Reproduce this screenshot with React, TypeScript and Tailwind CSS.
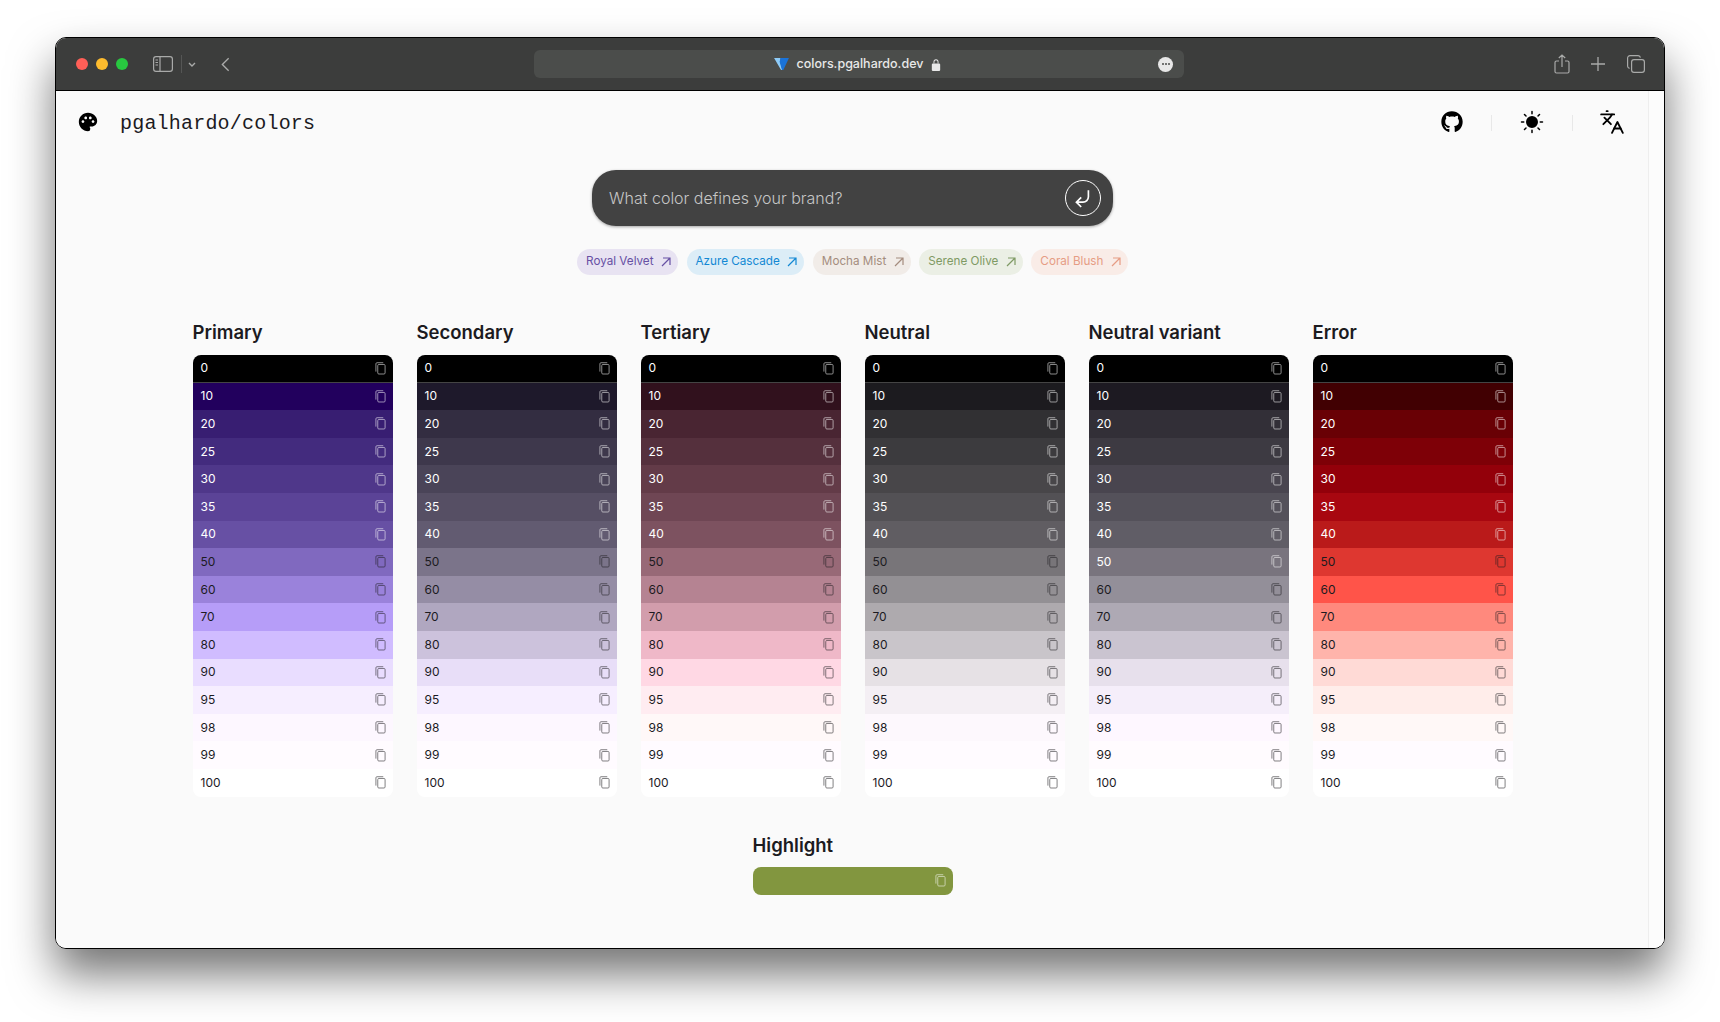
import { Languages } from "lucide-react";
import { MdPalette } from "react-icons/md";
import { FaGithub } from "react-icons/fa";
import { PiSunFill } from "react-icons/pi";

const TONES = ["0", "10", "20", "25", "30", "35", "40", "50", "60", "70", "80", "90", "95", "98", "99", "100"];

const PALETTES = [
  {
    name: "Primary",
    rows: [
      "bg-[#000000]", "bg-[#22005d]", "bg-[#381e72]", "bg-[#432b7e]", "bg-[#4f378a]", "bg-[#5b4397]", "bg-[#6750a4]", "bg-[#8069bf]",
      "bg-[#9a82db]", "bg-[#b69df8]", "bg-[#d0bcff]", "bg-[#e9ddff]", "bg-[#f6eeff]", "bg-[#fdf7ff]", "bg-[#fffbff]", "bg-[#ffffff]",
    ],
  },
  {
    name: "Secondary",
    rows: [
      "bg-[#000000]", "bg-[#1e192b]", "bg-[#332d41]", "bg-[#3e384c]", "bg-[#4a4458]", "bg-[#564f64]", "bg-[#625b71]", "bg-[#7b748a]",
      "bg-[#958da5]", "bg-[#b0a7c0]", "bg-[#ccc2dc]", "bg-[#e8def8]", "bg-[#f6eeff]", "bg-[#fdf7ff]", "bg-[#fffbff]", "bg-[#ffffff]",
    ],
  },
  {
    name: "Tertiary",
    rows: [
      "bg-[#000000]", "bg-[#31111d]", "bg-[#492532]", "bg-[#55303d]", "bg-[#633b48]", "bg-[#6f4654]", "bg-[#7d5260]", "bg-[#986977]",
      "bg-[#b58392]", "bg-[#d29dac]", "bg-[#efb8c8]", "bg-[#ffd8e4]", "bg-[#ffecf1]", "bg-[#fff8f8]", "bg-[#fffbff]", "bg-[#ffffff]",
    ],
  },
  {
    name: "Neutral",
    rows: [
      "bg-[#000000]", "bg-[#1c1b1f]", "bg-[#313033]", "bg-[#3c3b3e]", "bg-[#484649]", "bg-[#535155]", "bg-[#605d62]", "bg-[#787579]",
      "bg-[#939094]", "bg-[#aeaaae]", "bg-[#c9c5ca]", "bg-[#e6e1e5]", "bg-[#f4eff4]", "bg-[#fdf8fd]", "bg-[#fffbff]", "bg-[#ffffff]",
    ],
  },
  {
    name: "Neutral variant",
    lightFifty: true,
    rows: [
      "bg-[#000000]", "bg-[#1d1a22]", "bg-[#322f37]", "bg-[#3d3a42]", "bg-[#49454f]", "bg-[#54515a]", "bg-[#605d66]", "bg-[#79747e]",
      "bg-[#938f99]", "bg-[#aea9b4]", "bg-[#cac4d0]", "bg-[#e7e0ec]", "bg-[#f5eefa]", "bg-[#fef7ff]", "bg-[#fffbfe]", "bg-[#ffffff]",
    ],
  },
  {
    name: "Error",
    rows: [
      "bg-[#000000]", "bg-[#410002]", "bg-[#690005]", "bg-[#7e0007]", "bg-[#93000a]", "bg-[#a80710]", "bg-[#ba1a1a]", "bg-[#de3730]",
      "bg-[#ff5449]", "bg-[#ff897d]", "bg-[#ffb4ab]", "bg-[#ffdad6]", "bg-[#ffedea]", "bg-[#fff8f7]", "bg-[#fffbff]", "bg-[#ffffff]",
    ],
  },
];

const CHIPS = [
  { label: "Royal Velvet", cls: "bg-[#e8e3f2] text-[#6750a4]" },
  { label: "Azure Cascade", cls: "bg-[#dcedf7] text-[#1288d4]" },
  { label: "Mocha Mist", cls: "bg-[#f1ece8] text-[#a48c7e]" },
  { label: "Serene Olive", cls: "bg-[#ebefe5] text-[#7f9a64]" },
  { label: "Coral Blush", cls: "bg-[#f9ece7] text-[#e69c84]" },
];

function CopyIcon({ className }: { className?: string }) {
  return (
    <svg viewBox="0 0 12 14" className={`h-[13px] w-[11px] ${className ?? ""}`} fill="none" stroke="currentColor" strokeWidth="1">
      <rect x="3" y="2.6" width="8" height="10.4" rx="1.2" />
      <path d="M9 0.7H2.2A1.2 1.2 0 0 0 1 1.9V10.4" />
    </svg>
  );
}

function Swatch({ tone, bg, dark, first, last }: { tone: string; bg: string; dark: boolean; first: boolean; last: boolean }) {
  return (
    <div
      className={`flex h-[27.6px] items-center justify-between pl-2 pr-[7px] text-xs ${bg} ${dark ? "text-[#1c1b1f]" : "text-white"} ${
        first ? "rounded-t-lg border-b border-[#444444]" : ""
      } ${last ? "rounded-b-lg" : ""}`}
    >
      <span>{tone}</span>
      <CopyIcon className="opacity-60" />
    </div>
  );
}

function Toolbar() {
  return (
    <div className="relative flex h-[53px] shrink-0 items-center border-b border-black bg-[#3c3d3c] text-[#a9aaa9]">
      <div className="ml-[20px] flex gap-2">
        <div className="h-3 w-3 rounded-full bg-[#ff5f57]" />
        <div className="h-3 w-3 rounded-full bg-[#febc2e]" />
        <div className="h-3 w-3 rounded-full bg-[#28c840]" />
      </div>
      <svg viewBox="0 0 20 16" className="ml-[25px] h-[16px] w-[20px]" fill="none" stroke="currentColor" strokeWidth="1.2">
        <rect x="0.6" y="0.6" width="18.8" height="14.8" rx="2.4" />
        <path d="M7 0.6V15.4M2.5 4H5M2.5 6.5H5M2.5 9H5" />
      </svg>
      <div className="ml-2 h-[18px] w-px bg-[#555655]" />
      <svg viewBox="0 0 8 5" className="ml-[6px] h-[5px] w-[8px]" fill="none" stroke="currentColor" strokeWidth="1.4">
        <path d="M1 1l3 3 3-3" />
      </svg>
      <svg viewBox="0 0 10 16" className="ml-[25px] h-[15px] w-[9px]" fill="none" stroke="currentColor" strokeWidth="1.5">
        <path d="M8.5 1L1.5 8l7 7" />
      </svg>
      <div className="ml-[304px] flex h-[28px] w-[650px] items-center rounded-md bg-[#4b4d4b] pr-[11px] text-[#e8e8e8]">
        <div className="flex flex-1 items-center justify-center gap-[8px] pl-[23px]">
          <svg viewBox="0 0 16 14" className="h-[13px] w-[15px]">
            <path d="M0 0h7l-.5 4L9 13h-1.5z" fill="#8ecbf7" />
            <path d="M7 0h9l-6 13H8.5L6 4z" fill="#1a73d9" />
          </svg>
          <span className="pt-px text-[12.5px] font-medium">colors.pgalhardo.dev</span>
          <svg viewBox="0 0 10 14" className="h-[13px] w-[10px]" fill="currentColor">
            <path d="M2.3 6V4a2.7 2.7 0 0 1 5.4 0v2h-1V4a1.7 1.7 0 0 0-3.4 0v2z" />
            <rect x="0.5" y="6" width="9" height="8" rx="1.2" />
          </svg>
        </div>
        <div className="flex h-[15px] w-[15px] items-center justify-center gap-px rounded-full bg-[#e8e8e8]">
          <div className="h-[2px] w-[2px] rounded-full bg-[#4b4d4b]" />
          <div className="h-[2px] w-[2px] rounded-full bg-[#4b4d4b]" />
          <div className="h-[2px] w-[2px] rounded-full bg-[#4b4d4b]" />
        </div>
      </div>
      <svg viewBox="0 0 16 20" className="ml-[370px] h-[20px] w-[16px]" fill="none" stroke="currentColor" strokeWidth="1.2">
        <path d="M5 7H2.5A1.5 1.5 0 0 0 1 8.5v9A1.5 1.5 0 0 0 2.5 19h11a1.5 1.5 0 0 0 1.5-1.5v-9A1.5 1.5 0 0 0 13.5 7H11M8 13V1M4.8 4L8 1l3.2 3" />
      </svg>
      <svg viewBox="0 0 14 14" className="ml-[21px] h-[14px] w-[14px]" fill="none" stroke="currentColor" strokeWidth="1.3">
        <path d="M7 0V14M0 7H14" />
      </svg>
      <svg viewBox="0 0 18 18" className="ml-[22px] h-[18px] w-[18px]" fill="none" stroke="currentColor" strokeWidth="1.2">
        <rect x="4.6" y="4.6" width="12.8" height="12.8" rx="2.4" />
        <path d="M13.4 2.6A2.4 2.4 0 0 0 11.2 0.6H3A2.4 2.4 0 0 0 0.6 3v8.2a2.4 2.4 0 0 0 2 2.2" />
      </svg>
    </div>
  );
}

function Header() {
  return (
    <header className="flex h-[64px] shrink-0 items-center justify-between pl-[20px] pr-[23px] text-black">
      <div className="flex items-center gap-[21px]">
        <MdPalette size={22} className="-mt-0.5" />
        <span className="mt-px font-['Liberation_Mono'] text-[20px] tracking-[0.2px] text-[#1c1b1f]">pgalhardo/colors</span>
      </div>
      <div className="flex items-center gap-7">
        <FaGithub size={22} className="-mt-0.5" />
        <div className="h-[16px] w-px bg-[#e8e8e8]" />
        <PiSunFill size={24} className="-mt-0.5" />
        <div className="h-[16px] w-px bg-[#e8e8e8]" />
        <Languages size={26} strokeWidth={1.7} className="-ml-0.5 -mt-0.5" />
      </div>
    </header>
  );
}

function SearchBox() {
  return (
    <div className="flex h-[56px] w-[521px] items-center justify-between rounded-[24px] bg-[#424242] pl-[17px] pr-[12px] shadow-[0_1px_3px_rgba(0,0,0,0.35)]">
      <span className="text-[16px] font-light text-[#c6c6c6]">What color defines your brand?</span>
      <div className="flex h-[36px] w-[36px] items-center justify-center rounded-full border border-white text-white">
        <svg viewBox="0 0 20 20" className="h-[24px] w-[24px]" fill="none" stroke="currentColor" strokeWidth="1.4">
          <path d="M14.5 3.5V9a4.5 4.5 0 0 1-4.5 4.5H4.5M8.5 9.5l-4 4 4 4" />
        </svg>
      </div>
    </div>
  );
}

export default function App() {
  return (
    <div className="min-h-screen bg-white pl-[55px] pr-[55px] pt-[37px] font-['Inter',sans-serif]">
      <div className="flex h-[912px] flex-col overflow-hidden rounded-[11px] border border-black shadow-[0_25px_45px_rgba(0,0,0,0.55)]">
        <Toolbar />
        <div className="flex min-h-0 flex-1 bg-[#fafafa]">
          <main className="flex min-w-0 flex-1 flex-col items-center pl-px">
            <div className="w-full">
              <Header />
            </div>
            <div className="mt-[15px]">
              <SearchBox />
            </div>
            <div className="mt-[23px] flex gap-[8.5px]">
              {CHIPS.map((chip) => (
                <div key={chip.label} className={`flex h-[26px] items-center gap-[7.5px] rounded-full pl-[9px] pr-[7px] text-[11.7px] ${chip.cls}`}>
                  {chip.label}
                  <svg viewBox="0 0 10 10" className="h-[10px] w-[10px]" fill="none" stroke="currentColor" strokeWidth="1.2">
                    <path d="M1 9L9 1M2 1H9V8" />
                  </svg>
                </div>
              ))}
            </div>
            <div className="mt-[43px] grid w-[1320px] grid-cols-6 gap-6">
              {PALETTES.map((palette) => (
                <section key={palette.name}>
                  <h2 className="mb-[9px] text-[18.5px] font-semibold leading-7 text-[#1c1b1f]">{palette.name}</h2>
                  <div>
                    {TONES.map((tone, i) => (
                      <Swatch
                        key={tone}
                        tone={tone}
                        bg={palette.rows[i]}
                        dark={i >= 7 && !(palette.lightFifty && i === 7)}
                        first={i === 0}
                        last={i === TONES.length - 1}
                      />
                    ))}
                  </div>
                </section>
              ))}
            </div>
            <section className="mt-[34px] w-[200px]">
              <h2 className="mb-[8px] text-[18.5px] font-semibold leading-7 text-[#1c1b1f]">Highlight</h2>
              <div className="flex h-[28px] items-center justify-end rounded-lg bg-[#82963f] pl-2 pr-[7px] text-white">
                <CopyIcon className="opacity-60" />
              </div>
            </section>
          </main>
          <div className="w-[16px] shrink-0 border-l border-[#eeeeee] bg-[#fcfcfc]" />
        </div>
      </div>
    </div>
  );
}
